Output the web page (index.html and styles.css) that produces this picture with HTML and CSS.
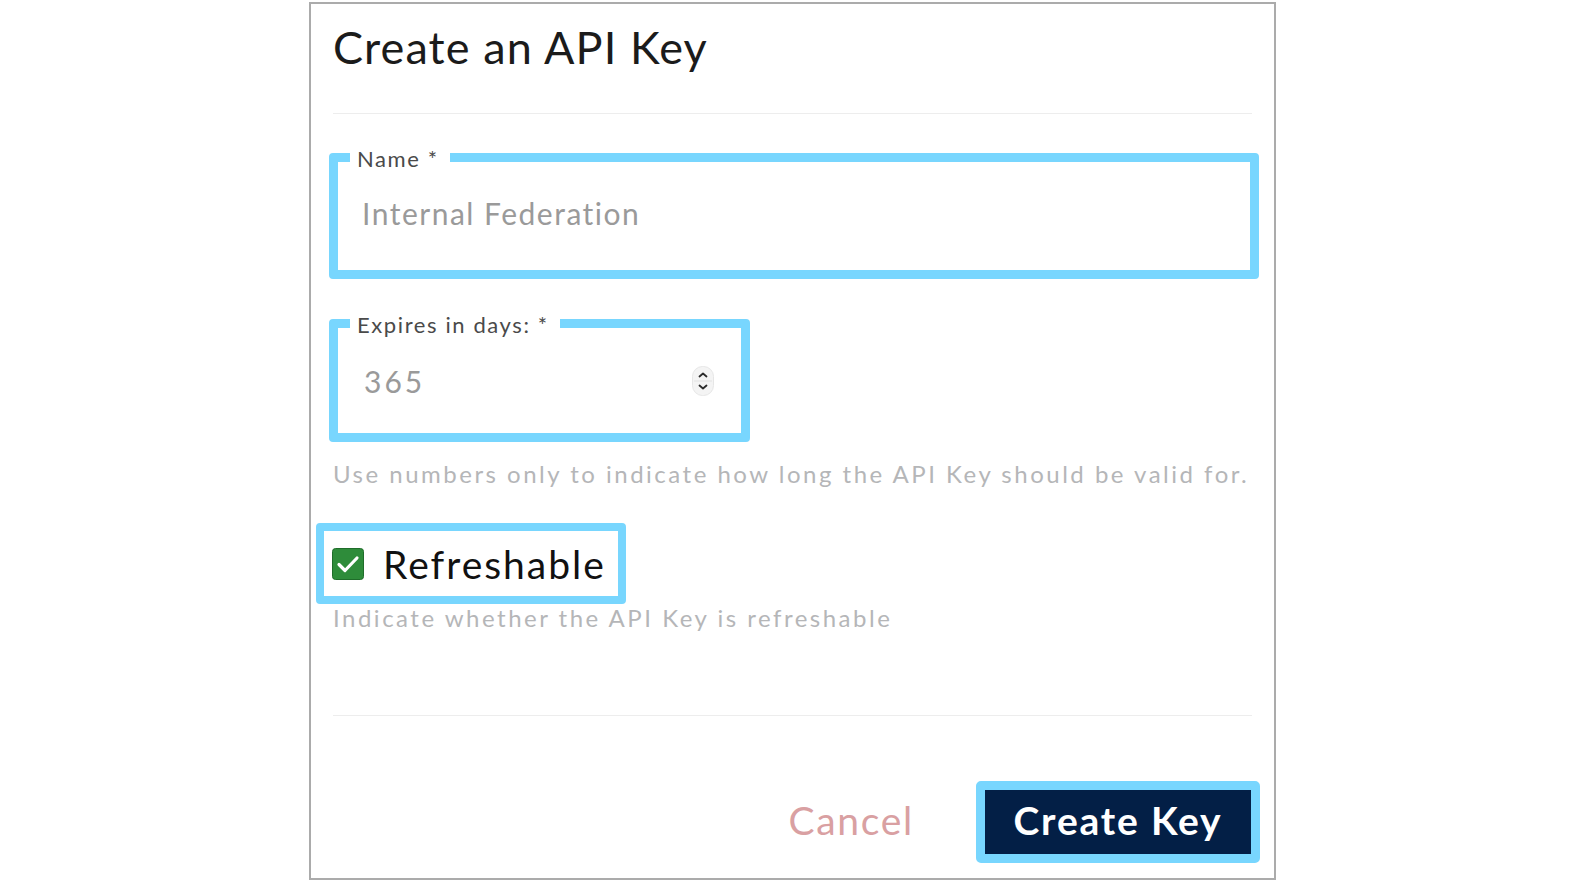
FILE: index.html
```html
<!DOCTYPE html>
<html lang="en">
<head>
<meta charset="utf-8">
<title>Create an API Key</title>
<link rel="stylesheet" href="styles.css">
</head>
<body>
<div class="dialog">
  <h1 class="title">Create an API Key</h1>
  <hr class="sep">
  <fieldset class="field field-name">
    <legend>Name *</legend>
    <div class="input">Internal Federation</div>
  </fieldset>
  <fieldset class="field field-days">
    <legend>Expires in days: *</legend>
    <div class="input input-number">
      <span class="number">365</span>
      <svg class="spinner" width="22" height="30" viewBox="0 0 22 30">
        <rect x="0.5" y="0.5" width="21" height="29" rx="10" fill="#f4f4f4" stroke="#e6e6e6"/>
        <line x1="2" y1="15" x2="20" y2="15" stroke="#e2e2e2"/>
        <path d="M7.5 10.5 L11 7.5 L14.5 10.5" fill="none" stroke="#2b2b2b" stroke-width="1.8" stroke-linecap="round" stroke-linejoin="round"/>
        <path d="M7.5 19.5 L11 22.5 L14.5 19.5" fill="none" stroke="#2b2b2b" stroke-width="1.8" stroke-linecap="round" stroke-linejoin="round"/>
      </svg>
    </div>
  </fieldset>
  <p class="help">Use numbers only to indicate how long the API Key should be valid for.</p>
  <label class="check">
    <span class="box">
      <svg width="32" height="32" viewBox="0 0 32 32">
        <rect x="0.5" y="0.5" width="31" height="31" rx="3" fill="#2e8c3a" stroke="#1f6d2a"/>
        <path d="M7 16.5 L13 22.5 L25 10" fill="none" stroke="#ffffff" stroke-width="3.2" stroke-linecap="round" stroke-linejoin="round"/>
      </svg>
    </span>
    <span class="check-text">Refreshable</span>
  </label>
  <p class="help help-check">Indicate whether the API Key is refreshable</p>
  <hr class="sep sep-bottom">
  <div class="actions">
    <button class="cancel" type="button">Cancel</button>
    <button class="create" type="button">Create Key</button>
  </div>
</div>
</body>
</html>
```
FILE: styles.css
```css
html, body {
  margin: 0;
  padding: 0;
  background: #ffffff;
}

body {
  font-family: Lato, "Open Sans", "Liberation Sans", sans-serif;
}

.dialog {
  width: 967px;
  height: 878px;
  margin: 2px 0 0 309px;
  box-sizing: border-box;
  border: 2px solid #ababab;
  padding: 0 22px;
  display: flex;
  flex-direction: column;
}

.title {
  margin: 16px 0 0;
  font-size: 45px;
  line-height: 54px;
  font-weight: 400;
  letter-spacing: 1.1px;
  color: #1b1b1b;
}

.sep {
  border: 0;
  height: 1px;
  background: #ededed;
  margin: 39px 0 0;
}

.field {
  margin: 28px 0 0 -4px;
  border: 9px solid #78d6fe;
  border-radius: 4px;
  padding: 0;
  min-width: 0;
  box-sizing: border-box;
}

.field legend {
  margin-left: 12px;
  padding: 4px 11px 0 7px;
  font-size: 22px;
  line-height: 26px;
  letter-spacing: 1.6px;
  color: #4a4a4a;
}

.field-name {
  width: 930px;
}

.field-days {
  width: 421px;
  margin-top: 29px;
}

.input {
  padding: 23px 24px 39px;
  font-size: 30px;
  line-height: 36px;
  letter-spacing: 1.5px;
  color: #9a9a9a;
}

.input-number {
  padding: 25px 27px 34px 26px;
  display: flex;
  align-items: center;
  justify-content: space-between;
}

.number {
  letter-spacing: 3px;
}

.spinner {
  display: block;
}

.help {
  margin: 17px 0 0;
  font-size: 24px;
  line-height: 30px;
  letter-spacing: 2.5px;
  color: #b5b6b8;
}

.check {
  margin: 34px 0 0 -17px;
  align-self: flex-start;
  display: flex;
  align-items: center;
  gap: 19px;
  height: 81px;
  box-sizing: border-box;
  border: 8px solid #78d6fe;
  border-radius: 4px;
  padding: 0 12px 0 8px;
}

.box svg {
  display: block;
}

.check-text {
  font-size: 39px;
  line-height: 46px;
  letter-spacing: 2px;
  color: #111111;
}

.help-check {
  margin-top: -1px;
}

.sep-bottom {
  margin-top: 82px;
}

.actions {
  margin: 65px -8px 0 0;
  display: flex;
  justify-content: flex-end;
  align-items: center;
  gap: 62px;
}

.cancel {
  font-family: inherit;
  font-size: 39px;
  line-height: 46px;
  letter-spacing: 1.7px;
  color: #d9a0a2;
  background: none;
  border: 0;
  padding: 0 0 5px;
}

.create {
  font-family: inherit;
  font-size: 39px;
  line-height: 46px;
  font-weight: 700;
  letter-spacing: 1.8px;
  color: #ffffff;
  background: #031f46;
  border: 9px solid #78d6fe;
  border-radius: 5px;
  width: 284px;
  height: 82px;
  padding: 0 0 5px;
  box-sizing: border-box;
}
```
